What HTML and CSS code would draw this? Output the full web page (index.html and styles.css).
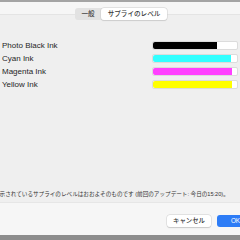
FILE: index.html
```html
<!DOCTYPE html>
<html lang="ja">
<head>
    <meta charset="UTF-8">
    <meta name="viewport" content="width=device-width, initial-scale=1.0">
    <title>サプライのレベル</title>
    <link rel="stylesheet" href="styles.css">
</head>
<body>
    <div class="main-body">
        <div class="top-line"></div>
        <div class="head-body">
            <div class="segmented">
                <div class="seg-item">一般</div>
                <div class="seg-item active">サプライのレベル</div>
            </div>
        </div>
        <div class="box-body">
            <div class="list-body">
                <div class="list-item">
                    <span class="ink-name">Photo Black Ink</span>
                    <div class="level-bar"><div class="level black" style="width: 76%"></div></div>
                </div>
                <div class="list-item">
                    <span class="ink-name">Cyan Ink</span>
                    <div class="level-bar"><div class="level cyan" style="width: 93%"></div></div>
                </div>
                <div class="list-item">
                    <span class="ink-name">Magenta Ink</span>
                    <div class="level-bar"><div class="level magenta" style="width: 94%"></div></div>
                </div>
                <div class="list-item">
                    <span class="ink-name">Yellow Ink</span>
                    <div class="level-bar"><div class="level yellow" style="width: 94%"></div></div>
                </div>
            </div>
            <div class="note">表示されているサプライのレベルはおおよそのものです (前回のアップデート: 今日の15:20)。</div>
        </div>
        <div class="control-body">
            <button class="btn">キャンセル</button>
            <button class="btn primary">OK</button>
        </div>
        <div class="bottom-line"></div>
    </div>
</body>
</html>
```

FILE: styles.css
```css
body {
    padding: 0;
    margin: 0;
    overflow: hidden;
    font-family: "Liberation Sans", "Noto Sans CJK JP", sans-serif;
    color: #262626;
}
.main-body {
    width: 240px;
    height: 240px;
    background-color: #f6f6f6;
    display: flex;
    flex-direction: column;
    overflow: hidden;
}
.top-line {
    height: 2px;
    background-color: #a4a4a4;
}
.head-body {
    display: flex;
    justify-content: center;
    padding-top: 6px;
    padding-left: 2px;
    position: relative;
    z-index: 1;
}
.segmented {
    display: flex;
    height: 12px;
    background-color: #e2e2e2;
    border-radius: 3px;
}
.seg-item {
    font-size: 6.6px;
    font-weight: 500;
    line-height: 12px;
    color: #3a3a3a;
    padding: 0 6px;
}
.seg-item:first-child {
    width: 14px;
    text-align: center;
}
.seg-item.active {
    background-color: #ffffff;
    border-radius: 3px;
    box-shadow: 0 0 0 0.5px #cfcfcf, 0 0.5px 1px rgba(0, 0, 0, 0.15);
    width: 54px;
    text-align: center;
}
.box-body {
    margin-top: -6px;
    height: 187px;
    background-color: #efefef;
    border-top: 1px solid #e4e4e4;
    border-bottom: 1px solid #e6e6e6;
    display: flex;
    flex-direction: column;
    justify-content: space-between;
}
.list-body {
    padding-top: 24px;
}
.list-item {
    height: 13px;
    display: flex;
    align-items: center;
    justify-content: space-between;
    padding-left: 2px;
    padding-right: 2px;
}
.ink-name {
    font-size: 8px;
}
.level-bar {
    width: 84px;
    height: 7px;
    background: #ffffff;
    border: 0.5px solid #dcdcdc;
    border-radius: 2px;
}
.level {
    height: 100%;
    border-radius: 2px 0 0 2px;
}
.black { background: #000000; }
.cyan { background: #33ffff; }
.magenta { background: #ff40ff; }
.yellow { background: #ffff00; }
.note {
    font-size: 5.6px;
    white-space: nowrap;
    margin-left: -6px;
    padding-bottom: 4px;
    color: #333;
}
.control-body {
    flex: 1;
    display: flex;
    align-items: center;
    justify-content: flex-end;
    gap: 6px;
    padding-top: 3px;
    margin-right: -14px;
}
.btn {
    width: 44px;
    height: 12px;
    padding: 0;
    border: none;
    border-radius: 3px;
    background: #ffffff;
    box-shadow: 0 0 0 0.5px #d2d2d2, 0 0.5px 1px rgba(0, 0, 0, 0.2);
    font-family: "Liberation Sans", "Noto Sans CJK JP", sans-serif;
    font-size: 6.4px;
    font-weight: 500;
    color: #333;
}
.btn.primary {
    width: 37px;
    background: #2d7cf6;
    color: #ffffff;
    box-shadow: none;
}
.bottom-line {
    height: 5px;
    background-color: #8d8d8d;
}
```
